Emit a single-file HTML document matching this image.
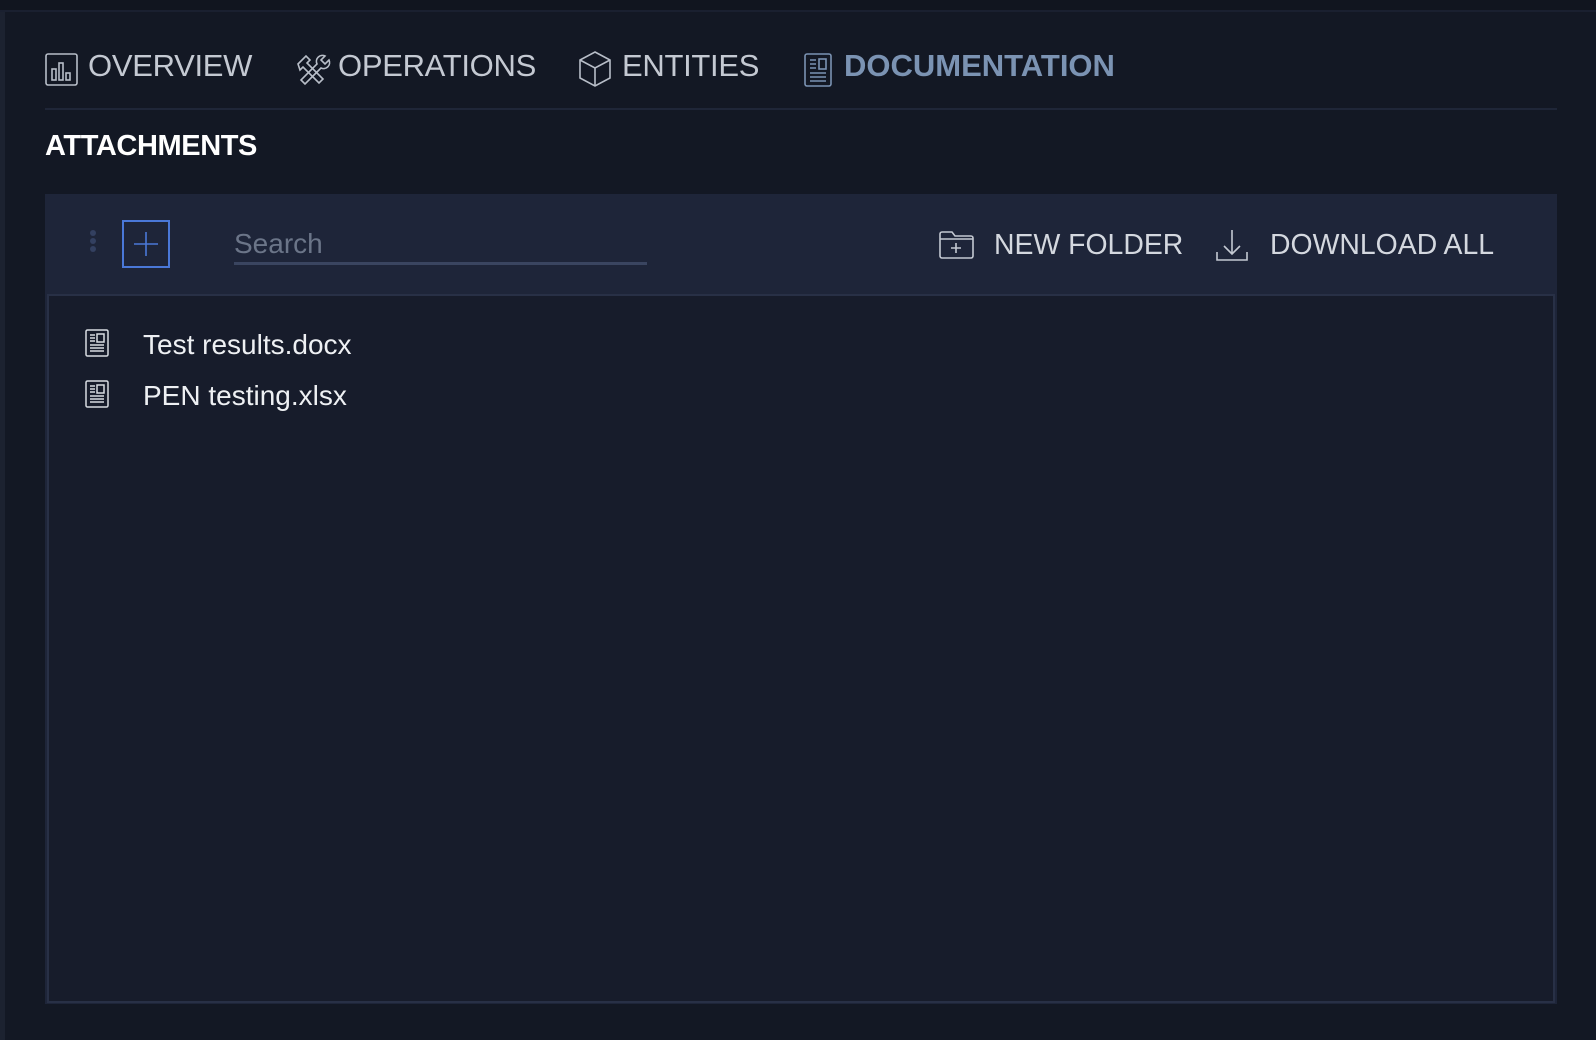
<!DOCTYPE html>
<html><head><meta charset="utf-8"><style>
*{margin:0;padding:0;box-sizing:border-box}
body{width:1596px;height:1040px;background:#131824;font-family:"Liberation Sans",sans-serif;position:relative;overflow:hidden}
.a{position:absolute}
.top{left:0;top:0;width:1596px;height:12px;background:#11151f;border-bottom:2px solid #1a2030}
.lstrip{left:0;top:12px;width:5px;height:1028px;background:#1c2230}
.tab{font-size:31px;color:#c4c9d2;top:48px;line-height:36px;letter-spacing:-0.3px}
.ic{position:absolute}
.div{left:45px;top:108px;width:1512px;height:2px;background:#1f2638}
.h{left:45px;top:130px;font-size:29px;font-weight:bold;color:#fff;letter-spacing:-0.4px}
.panel{left:45px;top:194px;width:1512px;height:810px;background:#1e2539}
.list{left:47px;top:294px;width:1508px;height:709px;background:#171c2b;border:2px solid #283046}
.btn{font-size:28.4px;color:#d4d8df;top:227px;line-height:36px}
.file{font-size:28px;color:#eef0f3;left:143px;line-height:34px}
</style></head><body>
<div class="a top"></div><div class="a lstrip"></div>

<svg class="ic" style="left:45px;top:53px" width="34" height="34" viewBox="0 0 34 34" fill="none" stroke="#b8bec8" stroke-width="1.6"><rect x="1" y="1" width="31" height="31" rx="2"/><rect x="7" y="16" width="4" height="11"/><rect x="14" y="10" width="4" height="17"/><rect x="21" y="20" width="4" height="7"/></svg>
<div class="a tab" style="left:88px">OVERVIEW</div>

<svg class="ic" style="left:295px;top:52px" width="36" height="34" viewBox="0 0 36 34" fill="none" stroke="#b8bec8" stroke-width="1.6"><path d="M3 12l8-8 4 4-3 3 16 16-4 4-16-16-3 3z"/><path d="M30 4a6 6 0 0 0-8 8L6 28l4 4 16-16a6 6 0 0 0 8-8l-4 4-4-4z"/></svg>
<div class="a tab" style="left:338px">OPERATIONS</div>

<svg class="ic" style="left:578px;top:50px" width="34" height="38" viewBox="0 0 34 38" fill="none" stroke="#b8bec8" stroke-width="1.6"><path d="M17 2L32 10V28L17 36L2 28V10Z"/><path d="M2 10L17 18L32 10M17 18V36"/></svg>
<div class="a tab" style="left:622px">ENTITIES</div>

<svg class="ic" style="left:804px;top:53px" width="28" height="34" viewBox="0 0 28 34" fill="none" stroke="#7b93b3" stroke-width="1.6"><rect x="1" y="1" width="26" height="32" rx="2"/><path d="M6 7h6M6 11h6M6 15h6M6 20h16M6 24h16M6 28h16"/><rect x="15" y="6" width="7" height="10"/></svg>
<div class="a tab" style="left:844px;color:#7b93b3;font-weight:bold;letter-spacing:0">DOCUMENTATION</div>

<div class="a div"></div>
<div class="a h">ATTACHMENTS</div>

<div class="a panel"></div>
<div class="a list"></div>

<svg class="ic" style="left:89px;top:229px" width="8" height="26"><circle cx="4" cy="4" r="3" fill="#334060"/><circle cx="4" cy="12" r="3" fill="#334060"/><circle cx="4" cy="20" r="3" fill="#334060"/></svg>
<div class="a" style="left:122px;top:220px;width:48px;height:48px;border:2px solid #4a78d8"></div>
<svg class="ic" style="left:122px;top:220px" width="48" height="48"><path d="M24 12v24M12 24h24" stroke="#4a78d8" stroke-width="1.6"/></svg>

<div class="a" style="left:234px;top:226px;font-size:28px;color:#6b7588;line-height:36px">Search</div>
<div class="a" style="left:234px;top:262px;width:413px;height:3px;background:#3a4560"></div>

<svg class="ic" style="left:938px;top:230px" width="38" height="30" viewBox="0 0 38 30" fill="none" stroke="#c4c9d2" stroke-width="1.6"><path d="M2 4a2 2 0 0 1 2-2h10l3 4h16a2 2 0 0 1 2 2v18a2 2 0 0 1-2 2H4a2 2 0 0 1-2-2z"/><path d="M2 9h33"/><path d="M18 13v10M13 18h10"/></svg>
<div class="a btn" style="left:994px">NEW FOLDER</div>

<svg class="ic" style="left:1214px;top:228px" width="36" height="34" viewBox="0 0 36 34" fill="none" stroke="#c4c9d2" stroke-width="1.6"><path d="M18 2v24M10 18l8 8 8-8"/><path d="M3 24v8h30v-8"/></svg>
<div class="a btn" style="left:1270px">DOWNLOAD ALL</div>

<svg class="ic" style="left:85px;top:329px" width="24" height="28" viewBox="0 0 24 28" fill="none" stroke="#d8dce2" stroke-width="1.5"><rect x="1" y="1" width="22" height="26" rx="1.5"/><path d="M5 6h5M5 9h5M5 12h5M5 16h14M5 19h14M5 22h14"/><rect x="12" y="5" width="7" height="8"/></svg>
<div class="a file" style="top:328px">Test results.docx</div>
<svg class="ic" style="left:85px;top:380px" width="24" height="28" viewBox="0 0 24 28" fill="none" stroke="#d8dce2" stroke-width="1.5"><rect x="1" y="1" width="22" height="26" rx="1.5"/><path d="M5 6h5M5 9h5M5 12h5M5 16h14M5 19h14M5 22h14"/><rect x="12" y="5" width="7" height="8"/></svg>
<div class="a file" style="top:379px">PEN testing.xlsx</div>
</body></html>
